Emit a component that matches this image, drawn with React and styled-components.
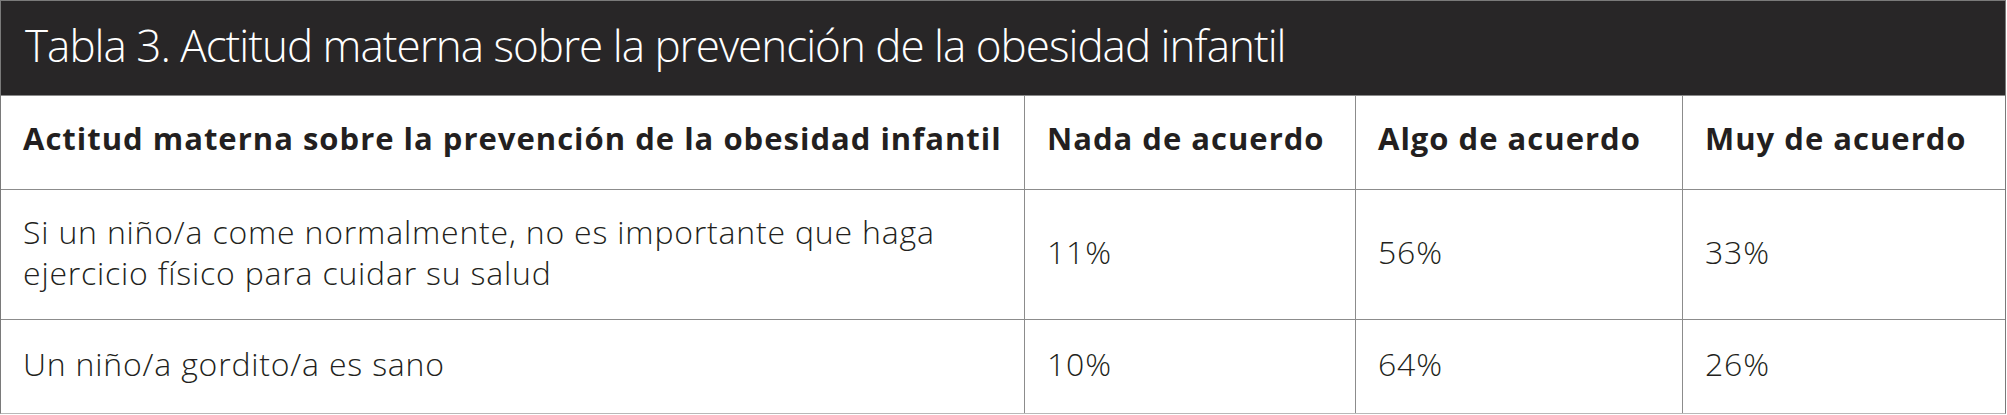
import React from "react";
import styled, { createGlobalStyle } from "styled-components";

const Global = createGlobalStyle`
  html, body { margin: 0; padding: 0; background: #ffffff; }
  body { font-family: "Open Sans", "Noto Sans", sans-serif; color: #231f20; }
`;

const Frame = styled.div`
  width: 2006px;
  height: 414px;
  box-sizing: border-box;
  border: 1px solid #7a7a7a;
  border-bottom-color: #b8b8b8;
  display: flex;
  flex-direction: column;
`;

const TitleBar = styled.div`
  height: 95px;
  flex: none;
  box-sizing: border-box;
  background: #282627;
  display: flex;
  align-items: center;
  padding: 0 0 7px 24px;
  color: #ffffff;
  font-size: 44px;
  font-weight: 300;
  letter-spacing: -1px;
  border-bottom: 1px solid #8a8a8a;
`;

const Grid = styled.div`
  display: grid;
  grid-template-columns: 1024px 331px 327px 1fr;
  grid-template-rows: 94px 130px 1fr;
  flex: 1;
`;

const Cell = styled.div`
  display: flex;
  align-items: center;
  padding: 0 0 ${(p) => (p.$head ? "8px" : "6px")} 22px;
  box-sizing: border-box;
  font-size: ${(p) => (p.$head ? "31px" : "32px")};
  font-weight: ${(p) => (p.$head ? 700 : 300)};
  letter-spacing: ${(p) => (p.$head ? "1px" : "0.8px")};
  line-height: 41px;
  color: #231f20;
  border-right: ${(p) => (p.$last ? "none" : "1px solid #8c8c8c")};
  border-bottom: ${(p) => (p.$bottom ? "none" : "1px solid #8c8c8c")};
`;

const headers = [
  "Actitud materna sobre la prevención de la obesidad infantil",
  "Nada de acuerdo",
  "Algo de acuerdo",
  "Muy de acuerdo",
];

const rows = [
  [
    <>
      Si un niño/a come normalmente, no es importante que haga
      <br />
      ejercicio físico para cuidar su salud
    </>,
    "11%",
    "56%",
    "33%",
  ],
  ["Un niño/a gordito/a es sano", "10%", "64%", "26%"],
];

export default function App() {
  return (
    <>
      <Global />
      <Frame>
        <TitleBar>Tabla 3. Actitud materna sobre la prevención de la obesidad infantil</TitleBar>
        <Grid>
          {headers.map((h, i) => (
            <Cell key={h} $head $last={i === 3}>
              {h}
            </Cell>
          ))}
          {rows.map((r, ri) =>
            r.map((c, ci) => (
              <Cell key={`${ri}-${ci}`} $last={ci === 3} $bottom={ri === rows.length - 1}>
                {c}
              </Cell>
            ))
          )}
        </Grid>
      </Frame>
    </>
  );
}
